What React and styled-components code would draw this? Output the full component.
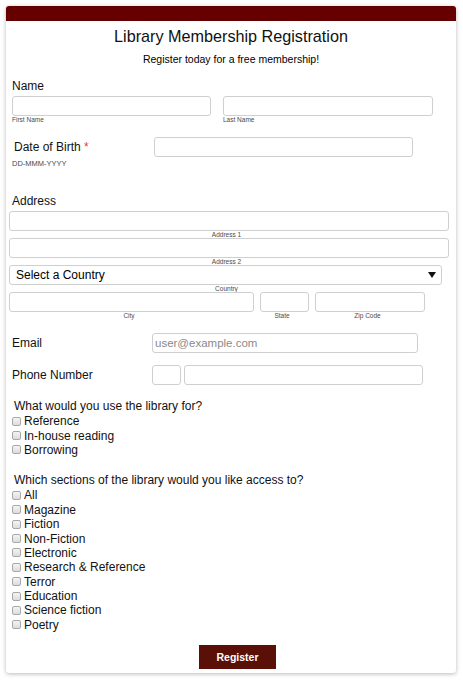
import React from "react";
import styled, { createGlobalStyle } from "styled-components";

const GlobalStyle = createGlobalStyle`
  body {
    margin: 0;
    background: #fff;
    font-family: "Liberation Sans", Arial, sans-serif;
    color: #111;
  }
`;

const Page = styled.div`
  padding: 6px;
`;

const Card = styled.form`
  width: 450px;
  background: #fff;
  border-radius: 3px;
  box-shadow: 0 1px 4px rgba(0, 0, 0, 0.28);
  overflow: hidden;
  padding-bottom: 4px;
`;

const HeaderBar = styled.div`
  height: 15px;
  background: #660000;
`;

const Title = styled.h1`
  margin: 4px 0 0;
  font-size: 16.2px;
  line-height: 22px;
  font-weight: normal;
  text-align: center;
  color: #111;
`;

const Subtitle = styled.p`
  margin: 5px 0 0;
  font-size: 10.5px;
  line-height: 14px;
  text-align: center;
  color: #000;
`;

const SectionLabel = styled.div`
  margin-top: ${(p) => p.$top}px;
  padding-left: 6px;
  font-size: 12px;
  line-height: 16px;
  color: #111;
`;

const Row = styled.div`
  display: flex;
  align-items: ${(p) => (p.$center ? "center" : "flex-start")};
  gap: ${(p) => p.$gap || 0}px;
  margin-top: ${(p) => p.$top || 0}px;
  padding-left: ${(p) => p.$indent ?? 6}px;
`;

const Field = styled.div`
  display: flex;
  flex-direction: column;
  width: ${(p) => p.$w}px;
`;

const Input = styled.input`
  box-sizing: border-box;
  width: ${(p) => (p.$w ? `${p.$w}px` : "100%")};
  height: 20px;
  margin: 0;
  padding: 0 2px;
  border: 1px solid #cfcfcf;
  border-radius: 3px;
  background: #fff;
  font-family: inherit;
  font-size: 11.5px;
  color: #111;
  outline: none;
  &::placeholder {
    color: #8a8a8a;
  }
`;

const Caption = styled.span`
  display: block;
  padding-right: ${(p) => (p.$center ? 5 : 0)}px;
  font-size: 6.5px;
  line-height: 7px;
  color: #4a4a4a;
  text-align: ${(p) => (p.$center ? "center" : "left")};
`;

const Hint = styled.div`
  margin-top: 2px;
  padding-left: 6px;
  font-size: 7.5px;
  line-height: 9px;
  color: #4a4a4a;
`;

const RowLabel = styled.label`
  box-sizing: border-box;
  width: ${(p) => p.$w}px;
  padding-left: ${(p) => p.$pad || 0}px;
  font-size: 12px;
  line-height: 16px;
  color: #111;
`;

const Required = styled.span`
  color: #e8403a;
`;

const SelectWrap = styled.div`
  position: relative;
  width: 433px;
`;

const Select = styled.select`
  appearance: none;
  box-sizing: border-box;
  width: 100%;
  height: 20px;
  margin: 0;
  padding: 0 0 0 6px;
  border: 1px solid #cfcfcf;
  border-radius: 3px;
  background: #fff;
  font-family: inherit;
  font-size: 12px;
  color: #000;
  outline: none;
`;

const Arrow = styled.svg`
  position: absolute;
  right: 6px;
  top: 7px;
  pointer-events: none;
`;

const Question = styled.div`
  margin-top: ${(p) => p.$top}px;
  padding-left: 8px;
  font-size: 12px;
  line-height: 14px;
  color: #111;
`;

const CheckList = styled.div`
  margin-top: 1px;
  padding-left: 6px;
`;

const CheckRow = styled.label`
  display: flex;
  align-items: center;
  gap: 3px;
  height: 14.4px;
  font-size: 12px;
  color: #111;
`;

const Box = styled.input`
  appearance: none;
  box-sizing: border-box;
  width: 9px;
  height: 9px;
  margin: 0;
  border: 1px solid #a8a8a8;
  border-radius: 2px;
  background: linear-gradient(#f4f4f4, #dcdcdc);
`;

const Footer = styled.div`
  display: flex;
  justify-content: center;
  margin-top: 13px;
  padding-left: 13px;
`;

const Button = styled.button`
  width: 77px;
  height: 24px;
  border: none;
  background: #5a1006;
  color: #fff;
  font-family: inherit;
  font-size: 10.5px;
  font-weight: bold;
  cursor: pointer;
`;

const uses = ["Reference", "In-house reading", "Borrowing"];
const sections = [
  "All",
  "Magazine",
  "Fiction",
  "Non-Fiction",
  "Electronic",
  "Research & Reference",
  "Terror",
  "Education",
  "Science fiction",
  "Poetry",
];

function Checks({ items }) {
  return (
    <CheckList>
      {items.map((item) => (
        <CheckRow key={item}>
          <Box type="checkbox" />
          {item}
        </CheckRow>
      ))}
    </CheckList>
  );
}

export default function App() {
  return (
    <Page>
      <GlobalStyle />
      <Card onSubmit={(e) => e.preventDefault()}>
        <HeaderBar />
        <Title>Library Membership Registration</Title>
        <Subtitle>Register today for a free membership!</Subtitle>

        <SectionLabel $top={12}>Name</SectionLabel>
        <Row $gap={12} $top={2}>
          <Field $w={199}>
            <Input />
            <Caption>First Name</Caption>
          </Field>
          <Field $w={210}>
            <Input />
            <Caption>Last Name</Caption>
          </Field>
        </Row>

        <Row $center $top={14}>
          <RowLabel $w={142} $pad={2}>
            Date of Birth <Required>*</Required>
          </RowLabel>
          <Input $w={259} />
        </Row>
        <Hint>DD-MMM-YYYY</Hint>

        <SectionLabel $top={25}>Address</SectionLabel>
        <Row $indent={3} $top={2}>
          <Field $w={440}>
            <Input />
            <Caption $center>Address 1</Caption>
          </Field>
        </Row>
        <Row $indent={3}>
          <Field $w={440}>
            <Input />
            <Caption $center>Address 2</Caption>
          </Field>
        </Row>
        <Row $indent={3}>
          <Field $w={440}>
            <SelectWrap>
              <Select defaultValue="">
                <option value="">Select a Country</option>
              </Select>
              <Arrow width="8" height="6" viewBox="0 0 8 6">
                <path d="M0 0H8L4 6Z" fill="#111" />
              </Arrow>
            </SelectWrap>
            <Caption $center>Country</Caption>
          </Field>
        </Row>
        <Row $indent={3} $gap={6}>
          <Field $w={245}>
            <Input />
            <Caption $center>City</Caption>
          </Field>
          <Field $w={49}>
            <Input />
            <Caption $center>State</Caption>
          </Field>
          <Field $w={110}>
            <Input />
            <Caption $center>Zip Code</Caption>
          </Field>
        </Row>

        <Row $center $top={14}>
          <RowLabel $w={140}>Email</RowLabel>
          <Input $w={266} placeholder="user@example.com" />
        </Row>
        <Row $center $top={12} $gap={3}>
          <RowLabel $w={137}>Phone Number</RowLabel>
          <Input $w={29} />
          <Input $w={239} />
        </Row>

        <Question $top={14}>What would you use the library for?</Question>
        <Checks items={uses} />

        <Question $top={16}>
          Which sections of the library would you like access to?
        </Question>
        <Checks items={sections} />

        <Footer>
          <Button type="submit">Register</Button>
        </Footer>
      </Card>
    </Page>
  );
}
